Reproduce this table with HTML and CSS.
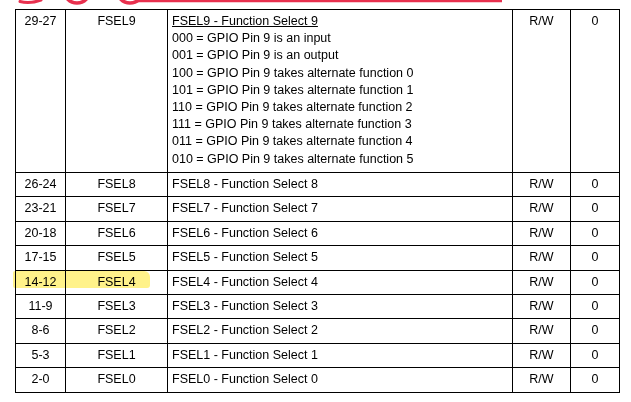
FILE: index.html
```html
<!DOCTYPE html>
<html>
<head>
<meta charset="utf-8">
<link rel="stylesheet" href="styles.css">
</head>
<body>
<div class="page">
  <svg class="marks" width="631" height="9" viewBox="0 0 631 9">
    <path d="M20 1.5 Q30 4 41 0" fill="none" stroke="#e8304e" stroke-width="3" stroke-linecap="round"/>
    <circle cx="77" cy="-10" r="13" fill="none" stroke="#e8304e" stroke-width="3.5"/>
    <circle cx="130" cy="-10" r="13" fill="none" stroke="#e8304e" stroke-width="3.5"/>
    <path d="M136 1 L502 1" stroke="#e8304e" stroke-width="2.4"/>
  </svg>
  <div class="tablewrap">
    <table class="reg">
      <colgroup>
        <col class="c-bits"><col class="c-name"><col class="c-desc"><col class="c-type"><col class="c-reset">
      </colgroup>
      <tr class="big">
        <td class="ctr">29-27</td>
        <td class="ctr">FSEL9</td>
        <td class="desc"><span class="u">FSEL9 - Function Select 9</span><br>000 = GPIO Pin 9 is an input<br>001 = GPIO Pin 9 is an output<br>100 = GPIO Pin 9 takes alternate function 0<br>101 = GPIO Pin 9 takes alternate function 1<br>110 = GPIO Pin 9 takes alternate function 2<br>111 = GPIO Pin 9 takes alternate function 3<br>011 = GPIO Pin 9 takes alternate function 4<br>010 = GPIO Pin 9 takes alternate function 5</td>
        <td class="ctr">R/W</td>
        <td class="ctr">0</td>
      </tr>
      <tr><td class="ctr">26-24</td><td class="ctr">FSEL8</td><td class="desc">FSEL8 - Function Select 8</td><td class="ctr">R/W</td><td class="ctr">0</td></tr>
      <tr><td class="ctr">23-21</td><td class="ctr">FSEL7</td><td class="desc">FSEL7 - Function Select 7</td><td class="ctr">R/W</td><td class="ctr">0</td></tr>
      <tr><td class="ctr">20-18</td><td class="ctr">FSEL6</td><td class="desc">FSEL6 - Function Select 6</td><td class="ctr">R/W</td><td class="ctr">0</td></tr>
      <tr><td class="ctr">17-15</td><td class="ctr">FSEL5</td><td class="desc">FSEL5 - Function Select 5</td><td class="ctr">R/W</td><td class="ctr">0</td></tr>
      <tr><td class="ctr">14-12</td><td class="ctr">FSEL4</td><td class="desc">FSEL4 - Function Select 4</td><td class="ctr">R/W</td><td class="ctr">0</td></tr>
      <tr><td class="ctr">11-9</td><td class="ctr">FSEL3</td><td class="desc">FSEL3 - Function Select 3</td><td class="ctr">R/W</td><td class="ctr">0</td></tr>
      <tr><td class="ctr">8-6</td><td class="ctr">FSEL2</td><td class="desc">FSEL2 - Function Select 2</td><td class="ctr">R/W</td><td class="ctr">0</td></tr>
      <tr><td class="ctr">5-3</td><td class="ctr">FSEL1</td><td class="desc">FSEL1 - Function Select 1</td><td class="ctr">R/W</td><td class="ctr">0</td></tr>
      <tr><td class="ctr">2-0</td><td class="ctr">FSEL0</td><td class="desc">FSEL0 - Function Select 0</td><td class="ctr">R/W</td><td class="ctr">0</td></tr>
    </table>
    <div class="highlight"></div>
  </div>
</div>
</body>
</html>
```

FILE: styles.css
```css
html, body {
  margin: 0;
  padding: 0;
  background: #ffffff;
}
.page {
  width: 631px;
  height: 402px;
  overflow: hidden;
  font-family: "Liberation Sans", Arial, sans-serif;
  font-size: 12.5px;
  color: #000;
}
.marks {
  display: block;
}
.tablewrap {
  position: relative;
  padding-left: 15px;
}
.reg {
  border-collapse: collapse;
  table-layout: fixed;
  width: 604px;
}
.c-bits { width: 50px; }
.c-name { width: 102px; }
.c-desc { width: 345px; }
.c-type { width: 58px; }
.c-reset { width: 49px; }
.reg td {
  border: 1px solid #000;
  padding: 0 4px;
  height: 23.4px;
  line-height: 17.2px;
  vertical-align: middle;
  white-space: nowrap;
}
.reg tr.big td {
  height: 159px;
  vertical-align: top;
  padding-top: 3px;
}
.reg td.ctr {
  text-align: center;
}
.reg td.desc {
  text-align: left;
}
.u {
  text-decoration: underline;
}
.highlight {
  position: absolute;
  left: 13px;
  top: 262px;
  width: 137px;
  height: 17px;
  background: #fff28a;
  mix-blend-mode: multiply;
  border-radius: 2px 6px 3px 2px;
}
```
